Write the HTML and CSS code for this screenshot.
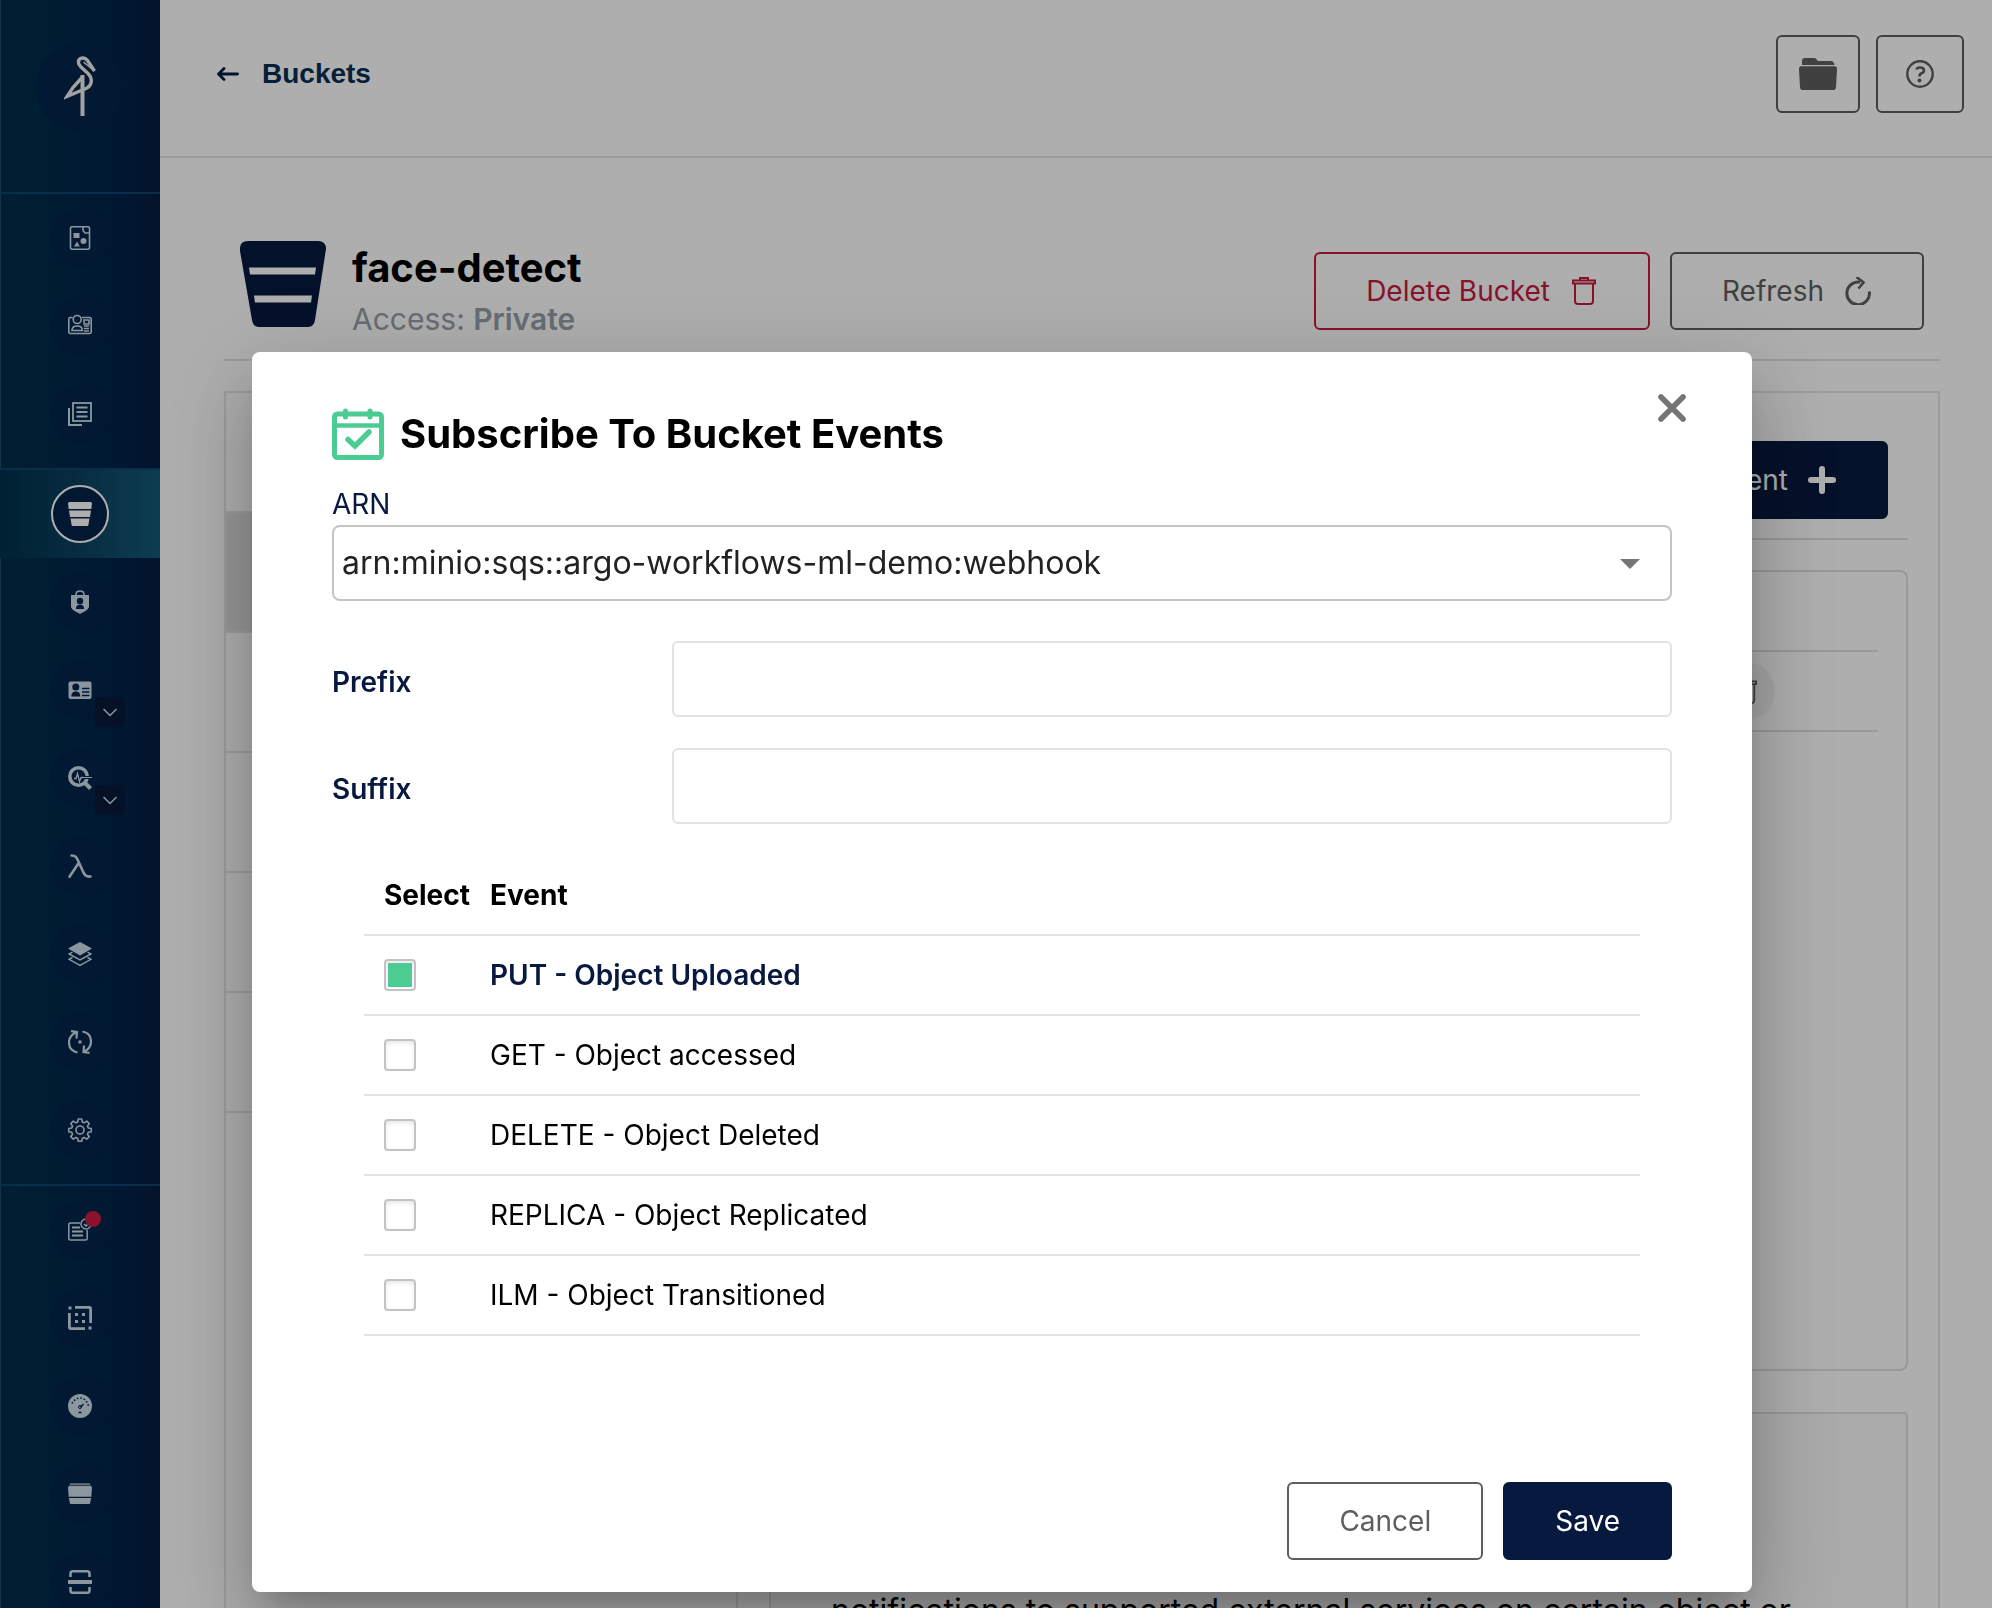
FILE: index.html
```html
<!DOCTYPE html>
<html lang="en">
<head>
<meta charset="utf-8">
<title>face-detect - Buckets</title>
<link rel="stylesheet" href="styles.css">
</head>
<body>
<div class="app">
  <nav class="sidebar" aria-label="Main">
    <div class="brand">
      <a class="brand-disc" href="#" aria-label="Home">
        <svg width="32" height="62" viewBox="0 0 32 62" fill="none" stroke="#eee" stroke-width="3.400"><path d="M30.500 15L23.500 4.500C20 0 14 2 14.500 6.500c0 2 1 3 2.500 4.500l7 6.500c5 5 4 12-1 14.500L3 40.500 9 31.500 18.500 21"/><path d="M30.500 15L19.500 6" stroke-width="1.600"/><path d="M18.500 19V60" stroke-width="4"/></svg>
      </a>
    </div>
    <div class="nav-group">
      <a class="nav-item" href="#" aria-label="Object Browser"><span class="disc"><svg width="24" height="24" viewBox="0 0 24 24" fill="none" stroke="currentColor" stroke-width="1.600"><rect x="2.500" y=".8" width="19" height="22.400" rx="1.500"/><path d="M15 1v3.500l2 2.500h4"/><path d="M5.500 7h6v5h-6zM9 15.500l2.800 5H6z" fill="currentColor" stroke="none"/><circle cx="15.500" cy="15" r="3" fill="currentColor" stroke="none"/></svg></span></a>
      <a class="nav-item" href="#" aria-label="Access Keys"><span class="disc"><svg width="24" height="24" viewBox="0 0 24 24" fill="none" stroke="currentColor" stroke-width="1.600"><path d="M4.500 3.500H2.300Q.8 3.500.8 5v13q0 1.500 1.500 1.500h19.400q1.500 0 1.500-1.500V5q0-1.500-1.500-1.500H14"/><circle cx="9.200" cy="5.500" r="4"/><path d="M4 16.500c0-3 2-4.500 5.200-4.500s5.200 1.500 5.200 4.500z"/><path d="M16 6h5v4h-5zM16 12h5M16 14.500h5M16 17h5"/></svg></span></a>
      <a class="nav-item" href="#" aria-label="Documentation"><span class="disc"><svg width="24" height="24" viewBox="0 0 24 24" fill="none" stroke="currentColor" stroke-width="1.800"><rect x="5" y="1" width="18" height="18"/><path d="M8.500 5.500h11M8.500 10h11M8.500 14.500h11"/><path d="M1 6v17h13" stroke-width="2"/></svg></span></a>
    </div>
    <div class="nav-group">
      <a class="nav-item active" href="#" aria-label="Buckets" aria-current="page"><span class="disc"><svg width="24" height="24" viewBox="0 0 24 24" fill="currentColor"><path d="M1.500 0h21Q24 0 24 1.500L23.300 7H.7L0 1.500Q0 0 1.500 0zM1 8.500h22l-1 6.500H2zM2.500 16.500h19l-1 6q-.2 1.500-1.500 1.500H5q-1.300 0-1.500-1.500z"/></svg></span></a>
      <a class="nav-item" href="#" aria-label="Policies"><span class="disc"><svg width="24" height="24" viewBox="0 0 24 24"><path d="M8 6V4.500C8 2.500 9.500 1 12 1s4 1.500 4 3.500V6" fill="none" stroke="currentColor" stroke-width="1.500"/><path d="M3 5h18v11c0 4-5 5.500-9 8-4-2.500-9-4-9-8z" fill="currentColor"/><circle cx="12" cy="11" r="3.200" fill="#02224a"/><path d="M8 19c0-3 1.500-4.500 4-4.500s4 1.500 4 4.500z" fill="#02224a"/></svg></span></a>
      <div class="nav-item"><a class="disc" href="#" aria-label="Identity"><svg width="24" height="24" viewBox="0 0 24 24"><rect x=".5" y="3.500" width="23" height="17.500" rx="2" fill="currentColor"/><circle cx="7.800" cy="9" r="3.500" fill="#02224a"/><path d="M3.300 18.500c0-3.500 1.500-5 4.500-5s4.500 1.500 4.500 5z" fill="#02224a"/><path d="M14 10.500h7.500M14 14h7.500M14 17.500h7.500" stroke="#02224a" stroke-width="1.300"/></svg></a><button class="expander" type="button" aria-label="Expand Identity"><svg width="14" height="9" viewBox="0 0 14 9" fill="none" stroke="currentColor" stroke-width="1.500"><path d="M.5 1L7 7.500 13.500 1"/></svg></button></div>
      <div class="nav-item"><a class="disc" href="#" aria-label="Monitoring"><svg width="24" height="24" viewBox="0 0 24 24" fill="none" stroke="currentColor"><circle cx="10.500" cy="10.500" r="8.700" stroke-width="3.600"/><path d="M17.500 17.500l5 5" stroke-width="4"/><path d="M6 12.500h2l1.500-5 2 8 1.500-4h3" stroke-width="1.300"/><path d="M15 11.500h9" stroke="#02224a" stroke-width="3"/><path d="M14 11.500h10" stroke-width="1"/></svg></a><button class="expander" type="button" aria-label="Expand Monitoring"><svg width="14" height="9" viewBox="0 0 14 9" fill="none" stroke="currentColor" stroke-width="1.500"><path d="M.5 1L7 7.500 13.500 1"/></svg></button></div>
      <a class="nav-item" href="#" aria-label="Notifications"><span class="disc"><svg width="24" height="24" viewBox="0 0 24 24" fill="none" stroke="currentColor" stroke-width="2.600" stroke-linecap="round"><path d="M3.500 1.500c4 0 5 1.500 6.500 5l5 11c1.500 4 3.500 5.500 7.500 5M11 8.500L1.500 22.700"/></svg></span></a>
      <a class="nav-item" href="#" aria-label="Tiers"><span class="disc"><svg width="24" height="24" viewBox="0 0 24 24" fill="none" stroke="currentColor" stroke-width="1.500"><path d="M12 0l12 6.500L12 13.500 0 6.500z" fill="currentColor" stroke="none"/><path d="M4.500 10.200L1 12l11 6 11-6-3.500-1.800M4.500 15.500L1 17.300l11 6 11-6-3.500-1.800"/></svg></span></a>
      <a class="nav-item" href="#" aria-label="Site Replication"><span class="disc"><svg width="24" height="24" viewBox="0 0 24 24" fill="none" stroke="currentColor" stroke-width="2.200"><path d="M9.500 22.500C4 21.500 1 17.500 1 12.500 1 8 3.500 4.500 8 2.500M3 1.200l6 .8-.5 6.500M14.500 1.500C20 2.500 23 6.500 23 11.500c0 4.500-2.500 8-7 10M21.500 22.800l-6-.8.5-6.500"/><rect x="10.500" y="10.500" width="3" height="3" fill="currentColor" stroke="none"/></svg></span></a>
      <a class="nav-item" href="#" aria-label="Settings"><span class="disc"><svg width="24" height="24" viewBox="0 0 24 24" fill="none" stroke="currentColor" stroke-width="1.600" stroke-linejoin="round"><circle cx="12" cy="12" r="4"/><path d="M10.300 1h3.400l.6 3 1.900.8 2.600-1.700 2.400 2.400-1.700 2.600.8 1.900 3 .5v3.200l-3 .6-.8 1.900 1.700 2.600-2.400 2.400-2.600-1.700-1.900.8-.6 3h-3.400l-.6-3-1.900-.8-2.600 1.700-2.400-2.400 1.700-2.600-.8-1.900-3-.6v-3.200l3-.5.8-1.900-1.700-2.600 2.400-2.400 2.600 1.700 1.900-.8z"/></svg></span></a>
    </div>
    <div class="nav-group">
      <a class="nav-item" href="#" aria-label="License"><span class="disc"><svg width="24" height="24" viewBox="0 0 24 24" fill="none" stroke="currentColor" stroke-width="1.500"><path d="M12 5H2.500Q.8 5 .8 6.500v14Q.8 22 2.500 22h15q1.700 0 1.700-1.500V12"/><path d="M4 9.500h8M4 13.500h11M4 17.500h11" stroke-width="2"/><circle cx="18" cy="6" r="5"/><path d="M16 6l2 2 3-3"/></svg><span class="alert-dot"></span></span></a>
      <a class="nav-item" href="#" aria-label="Health"><span class="disc"><svg width="24" height="24" viewBox="0 0 24 24" fill="none" stroke="currentColor" stroke-width="2.800"><path d="M7 1.400h14q1.600 0 1.600 1.600v14M1.400 7v14q0 1.600 1.600 1.600h14"/><g fill="currentColor" stroke="none"><path d="M.5.5h3v3h-3zM20.500 20.500h3v3h-3zM7 7h3v3H7zM14 7h3v3h-3zM7 14h3v3H7zM14 14h3v3h-3z"/></g></svg></span></a>
      <a class="nav-item" href="#" aria-label="Performance"><span class="disc"><svg width="24" height="24" viewBox="0 0 24 24"><circle cx="12" cy="12" r="12" fill="currentColor"/><path d="M4 9.500C6 5.500 9 4 12 4s7 2 8.500 8" fill="none" stroke="#02224a" stroke-width="1.600" stroke-dasharray="1.500 2"/><path d="M15.500 10l-3 3.500M10.500 18.500h3" stroke="#02224a" stroke-width="1.300"/><circle cx="12" cy="13" r="1.500" fill="none" stroke="#02224a"/></svg></span></a>
      <a class="nav-item" href="#" aria-label="Inspect"><span class="disc"><svg width="24" height="24" viewBox="0 0 24 24" fill="currentColor"><path d="M2 1.500h20v1.200H2zM1 3.800h22l1 1.700-.7 9.200H.7L0 5.500zM.8 16h22.400l-1 4.800q-.2 1.200-1.200 1.200H3q-1 0-1.200-1.200z"/></svg></span></a>
      <a class="nav-item" href="#" aria-label="Drives"><span class="disc"><svg width="24" height="24" viewBox="0 0 24 24" fill="none" stroke="currentColor" stroke-width="2.600"><path d="M2.500 7V3.500q0-2.200 2.200-2.200h14.600q2.200 0 2.200 2.200V7M2.500 17v3.500q0 2.200 2.200 2.200h14.600q2.200 0 2.200-2.200V17"/><path d="M0 12h24" stroke-width="4"/></svg></span></a>
    </div>
  </nav>

  <main class="page">
    <header class="topbar">
      <a class="back" href="#"><svg width="22" height="14" viewBox="0 0 22 14" fill="none" stroke="#07193e" stroke-width="2.800" stroke-linecap="round" stroke-linejoin="round"><path d="M7 1.500L1.500 7 7 12.500M2 7h18.500"/></svg>Buckets</a>
      <div class="actions actions-tight">
        <button class="btn btn-folder" type="button" aria-label="Object manager"><svg width="38" height="32" viewBox="0 0 38 32" fill="currentColor"><path d="M3 7V3q0-3 3-3h9q2 0 3 2l1 1h13q3 0 3.500 4H3zM2 8.200h34q2 0 2 3l-1 18q-.2 2.800-3 2.800H4q-2.800 0-3-2.800l-1-18q0-3 2-3z"/></svg></button>
        <button class="btn btn-help" type="button" aria-label="Help"><svg width="28" height="28" viewBox="0 0 28 28" fill="none" stroke="currentColor" stroke-width="2.400"><circle cx="14" cy="14" r="12.700"/><path d="M10.500 9.500Q11 7.500 14 7.500q4 0 4 3 0 2-2.500 2.800-2 .7-2 3.200" stroke-width="2.600"/><circle cx="13.500" cy="20.500" r="2" fill="currentColor" stroke="none"/></svg></button>
      </div>
    </header>

    <div class="content">
      <section class="title-row">
        <svg class="bucket-mark" width="86" height="86" viewBox="0 0 86 86" fill="#07193e"><path fill-rule="evenodd" d="M8 0h70q8 0 8 8L75 79q-1 7-7 7H19q-6 0-7-7L0 10Q-1 0 8 0zM9 26.500l1 7h65l1-7zM14 54.500l1 7h56l1-7z"/></svg>
        <div class="title-text">
          <h1>face-detect</h1>
          <p>Access: <strong>Private</strong></p>
        </div>
        <div class="actions title-actions">
          <button class="btn btn-danger" type="button">Delete Bucket<svg width="28" height="28" viewBox="-2 0 28 28" fill="none" stroke="currentColor" stroke-width="2"><path d="M1 3.500h22v3H1zM8 3.500V1h8v2.500M3 6.500V24q0 3 3 3h12q3 0 3-3V6.500"/></svg></button>
          <button class="btn" type="button">Refresh<svg width="28" height="28" viewBox="-1 0 28 28" fill="none" stroke="currentColor" stroke-width="3"><path d="M24.300 14.500A11.300 11.300 0 1 1 15 5.200"/><path d="M11.500 0l7 5.500-5 6" stroke-width="2.600"/></svg></button>
        </div>
      </section>

      <section class="panel">
        <nav class="tabs" aria-label="Bucket settings">
          <a class="tab" href="#" aria-label="Summary"></a>
          <a class="tab selected" href="#" aria-label="Events"></a>
          <a class="tab" href="#" aria-label="Replication"></a>
          <a class="tab" href="#" aria-label="Lifecycle"></a>
          <a class="tab" href="#" aria-label="Audit"></a>
          <a class="tab" href="#" aria-label="Access"></a>
        </nav>
        <div class="panel-body">
          <div class="panel-head">
            <button class="btn btn-primary" type="button">Subscribe to Event<svg width="28" height="28" viewBox="0 0 28 28" fill="none" stroke="currentColor" stroke-width="6" stroke-linecap="round"><path d="M14 3v22M3 14h22"/></svg></button>
          </div>
          <div class="event-list">
            <div class="event-row"></div>
            <div class="event-row"><button class="row-delete" type="button" aria-label="Delete event"><svg width="22" height="26" viewBox="0 0 24 28" fill="none" stroke="currentColor" stroke-width="2"><path d="M1 3.500h22v3H1zM8 3.500V1h8v2.500M3 6.500V24q0 3 3 3h12q3 0 3-3V6.500"/></svg></button></div>
          </div>
          <aside class="help-box">
            <h3>Event Notifications</h3>
            <p>MinIO bucket notifications allow administrators to send notifications to supported external services on certain object or bucket events.</p>
          </aside>
        </div>
      </section>
    </div>
  </main>
</div>

<div class="overlay">
  <form class="dialog" role="dialog" aria-modal="true" aria-labelledby="dialog-title">
    <button class="close" type="button" aria-label="Close"><svg width="28" height="28" viewBox="0 0 28 28" fill="none" stroke="currentColor" stroke-width="5.600" stroke-linecap="round"><path d="M3 3l22 22M25 3L3 25"/></svg></button>
    <h2 class="dialog-title" id="dialog-title"><svg width="52" height="52" viewBox="0 0 52 52" fill="none" stroke="#4ccb92" stroke-width="5"><rect x="2.500" y="6" width="47" height="43.500" rx="3"/><path d="M2 17.500h48" stroke-width="4.500"/><path d="M13.500 3v6M38 3v6" stroke-linecap="round"/><path d="M16 31.500l7 6.500 14-14" stroke-linecap="round" stroke-width="5.500"/></svg>Subscribe To Bucket Events</h2>
    <label class="arn-label" for="arn">ARN</label>
    <div class="select-box">
      <select id="arn"><option>arn:minio:sqs::argo-workflows-ml-demo:webhook</option></select>
      <svg class="caret" width="20" height="10" viewBox="0 0 20 10" fill="#757575"><path d="M0 0h20L10 10z"/></svg>
    </div>
    <div class="field"><label for="prefix">Prefix</label><input id="prefix" type="text"></div>
    <div class="field"><label for="suffix">Suffix</label><input id="suffix" type="text"></div>
    <table class="events">
      <thead><tr><th class="pick" scope="col">Select</th><th scope="col">Event</th></tr></thead>
      <tbody>
        <tr class="chosen"><td><input id="put" type="checkbox" checked></td><td><label for="put">PUT - Object Uploaded</label></td></tr>
        <tr><td><input id="get" type="checkbox"></td><td><label for="get">GET - Object accessed</label></td></tr>
        <tr><td><input id="delete" type="checkbox"></td><td><label for="delete">DELETE - Object Deleted</label></td></tr>
        <tr><td><input id="replica" type="checkbox"></td><td><label for="replica">REPLICA - Object Replicated</label></td></tr>
        <tr><td><input id="ilm" type="checkbox"></td><td><label for="ilm">ILM - Object Transitioned</label></td></tr>
      </tbody>
    </table>
    <div class="actions dialog-actions">
      <button class="btn" type="button">Cancel</button>
      <button class="btn btn-primary" type="submit">Save</button>
    </div>
  </form>
</div>
</body>
</html>
```
FILE: styles.css
```css
* { box-sizing: border-box; }
body {
  margin: 0;
  height: 100vh;
  overflow: hidden;
  font-family: Inter, "Liberation Sans", sans-serif;
  font-size: 28px;
  line-height: 34px;
  color: #000;
  background: #fff;
}
h1, h2, h3, p { margin: 0; }
a { color: inherit; text-decoration: none; }
button, input, select { font: inherit; color: inherit; }
svg { display: block; flex: none; }

.app { display: flex; height: 100vh; overflow: hidden; }

/* Sidebar */
.sidebar {
  flex: none;
  width: 160px;
  background: linear-gradient(90deg, #003049, #00264b 60%, #071d42);
  box-shadow: inset 1px 0 #1d506e;
  color: #ccdce8;
}
.brand { height: 192px; padding: 43px 36px 0; }
.brand-disc {
  display: flex;
  align-items: center;
  justify-content: center;
  width: 88px;
  height: 88px;
  border: 2px solid #02244a;
  border-radius: 50%;
  background: #04264d;
}
.nav-group { border-top: 2px solid #104370; padding-bottom: 10px; }
.nav-item {
  position: relative;
  display: flex;
  align-items: center;
  justify-content: center;
  height: 88px;
}
.disc {
  position: relative;
  display: flex;
  align-items: center;
  justify-content: center;
  width: 58px;
  height: 58px;
  border: 2px solid #02224a;
  border-radius: 50%;
  background: #04264d;
}
.active { background: linear-gradient(90deg, #00304b, #0b4260 50%, #155a7a); color: #fff; }
.active .disc { border-color: #fff; background: #02224a; }
.expander {
  position: absolute;
  right: 35px;
  bottom: 7px;
  display: flex;
  align-items: center;
  justify-content: center;
  width: 30px;
  height: 30px;
  padding: 0;
  border: 0;
  border-radius: 4px;
  background: #081938;
}
.alert-dot {
  position: absolute;
  top: 8px;
  right: 6px;
  width: 16px;
  height: 16px;
  border-radius: 50%;
  background: #cc1a42;
}

/* Page */
.page { flex: 1; min-width: 0; }
.topbar {
  display: flex;
  align-items: center;
  justify-content: space-between;
  height: 158px;
  padding: 0 28px 8px 57px;
  border-bottom: 2px solid #e5e5e5;
}
.back {
  display: flex;
  align-items: center;
  gap: 23px;
  font-family: "Liberation Sans", Arial, sans-serif;
  font-weight: 700;
  color: #073052;
}
.actions { display: flex; gap: 20px; }
.actions-tight { gap: 16px; }
.btn {
  display: flex;
  align-items: center;
  justify-content: center;
  gap: 20px;
  height: 78px;
  padding: 0 50px;
  border: 2px solid #5e5e5e;
  border-radius: 6px;
  background: transparent;
  color: #5e5e5e;
  white-space: nowrap;
}
.btn-folder { padding: 0 21px; }
.btn-help { padding: 0 28px; }
.btn-danger { border-color: #c8193f; color: #c8193f; }
.btn-primary { border-color: #07193e; background: #07193e; color: #fff; }

.content { padding: 64px 52px 0 64px; }
.title-row {
  display: flex;
  align-items: flex-start;
  height: 139px;
  padding: 19px 16px 0;
  border-bottom: 2px solid #e0e0e0;
}
.title-text { flex: 1; padding: 3px 0 0 26px; }
.title-actions { margin-top: 11px; }
h1 { font-size: 40px; line-height: 48px; }
.title-text p { margin-top: 9px; font-size: 30px; line-height: 36px; color: #969fa8; }
.title-text strong { font-weight: 600; }

.panel {
  display: flex;
  min-height: 1300px;
  margin-top: 30px;
  border: 2px solid #e5e5e5;
}
.tabs { flex: none; width: 512px; border-right: 2px solid #e5e5e5; }
.tab {
  display: block;
  height: 120px;
  border-bottom: 2px solid #e5e5e5;
}
.selected { background: #dedede; }
.panel-body { flex: 1; padding: 48px 30px 0 31px; }
.panel-head {
  display: flex;
  justify-content: flex-end;
  height: 99px;
  padding-right: 20px;
  border-bottom: 2px solid #e0e0e0;
}
.event-list {
  min-height: 801px;
  margin-top: 30px;
  padding: 0 28px;
  border: 2px solid #e0e0e0;
  border-radius: 8px;
}
.event-row {
  display: flex;
  align-items: center;
  justify-content: flex-end;
  height: 80px;
  padding-right: 103px;
  border-bottom: 2px solid #e0e0e0;
}
.row-delete {
  display: flex;
  align-items: center;
  justify-content: center;
  width: 58px;
  height: 58px;
  padding: 0;
  border: 0;
  border-radius: 50%;
  background: #f3f3f3;
  color: #5e5e5e;
}
.help-box {
  margin-top: 41px;
  padding: 64px 80px 64px 60px;
  border: 2px solid #e0e0e0;
  border-radius: 4px;
  background: #fafafa;
}
.help-box h3 { font-size: 32px; line-height: 40px; }
.help-box p { margin-top: 27px; font-size: 32px; line-height: 44px; }

/* Dialog */
.overlay {
  position: fixed;
  inset: 0;
  display: flex;
  justify-content: center;
  align-items: flex-start;
  padding: 352px 0 0 12px;
  background: rgba(0, 0, 0, .318);
}
.dialog {
  position: relative;
  width: 100%;
  max-width: 1500px;
  padding: 56px 80px 32px;
  border-radius: 8px;
  background: #fff;
  box-shadow: 0 22px 30px -14px rgba(0, 0, 0, .2), 0 48px 76px 6px rgba(0, 0, 0, .14), 0 18px 92px 16px rgba(0, 0, 0, .12);
}
.close {
  position: absolute;
  top: 42px;
  right: 66px;
  padding: 0;
  border: 0;
  background: none;
  color: #757575;
}
.dialog-title { display: flex; align-items: center; gap: 16px; font-size: 40px; line-height: 52px; }
.arn-label { display: block; margin-top: 27px; color: #07193e; }
.select-box { position: relative; margin-top: 4px; }
select {
  display: block;
  width: 100%;
  height: 76px;
  padding: 0 56px 0 8px;
  border: 2px solid #c4c4c4;
  border-radius: 8px;
  background: #fff;
  color: #222;
  font-size: 32px;
  line-height: 48px;
  appearance: none;
}
.caret { position: absolute; top: 34px; right: 32px; pointer-events: none; }
.field { display: flex; align-items: center; margin-top: 31px; }
.select-box + .field { margin-top: 40px; }
.field label { flex: none; width: 340px; padding-top: 6px; font-weight: 600; color: #07193e; }
.field input {
  flex: 1;
  min-width: 0;
  height: 76px;
  padding: 0 16px;
  border: 2px solid #e2e2e2;
  border-radius: 6px;
  background: #fff;
}
.events {
  width: calc(100% - 64px);
  margin: 32px 32px 0;
  border-collapse: separate;
  border-spacing: 0;
  table-layout: fixed;
}
.events th, .events td {
  height: 80px;
  padding: 0;
  border-bottom: 2px solid #e2e2e2;
  text-align: left;
  vertical-align: middle;
}
.events .pick { width: 126px; }
.events th:first-child, .events td:first-child { padding-left: 20px; }
.chosen label { font-weight: 600; color: #07193e; }
.events input {
  display: grid;
  place-items: center;
  width: 32px;
  height: 32px;
  margin: 0;
  border: 2px solid #c3c3c3;
  border-radius: 4px;
  background: #fff;
  box-shadow: inset 0 2px 4px rgba(0, 0, 0, .1);
  appearance: none;
}
.events input:checked::before {
  content: "";
  width: 24px;
  height: 24px;
  border-radius: 1px;
  background: #4ccb92;
}
.dialog-actions { justify-content: flex-end; margin-top: 146px; }
```
